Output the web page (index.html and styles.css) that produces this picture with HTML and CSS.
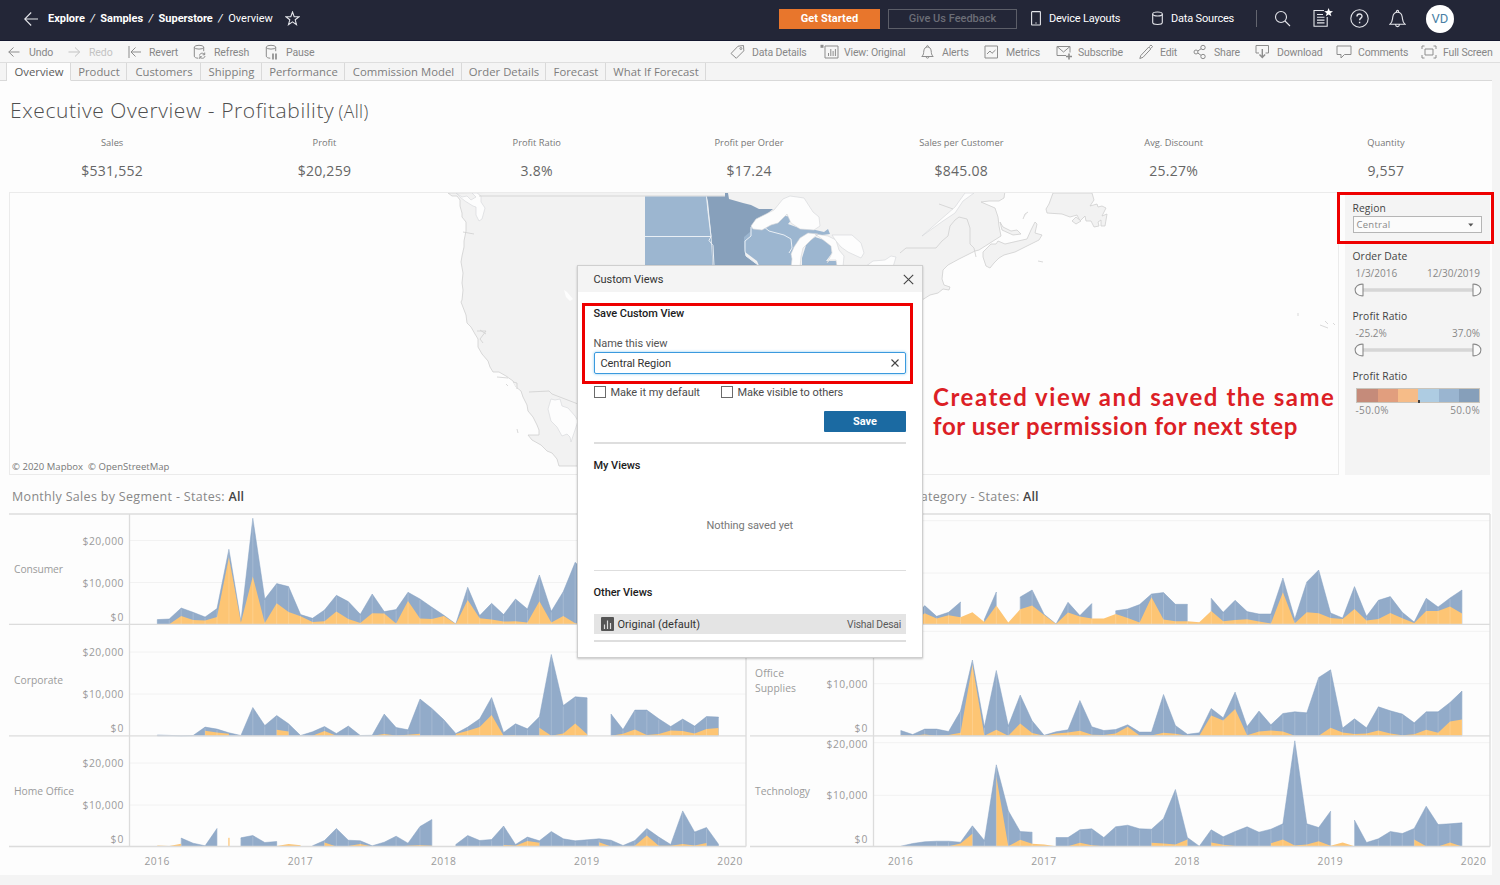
FILE: index.html
```html
<!DOCTYPE html>
<html lang="en">
<head>
<meta charset="utf-8">
<title>Superstore - Overview</title>
<link rel="stylesheet" href="styles.css">
</head>
<body>
<header class="topbar">
  <svg class="back" width="14" height="14" viewBox="0 0 14 14"><path d="M14 7H.8M7.2.5.7 7l6.500 6.500"/></svg>
  <nav class="crumbs"><b>Explore</b><i>/</i><b>Samples</b><i>/</i><b>Superstore</b><i>/</i><span>Overview</span></nav>
  <svg class="star" width="15" height="15" viewBox="0 0 15 15"><path d="M7.500 1l1.700 4.600 4.800.2-3.800 3 1.300 4.800-4-2.800-4 2.800 1.300-4.800L1 5.800l4.800-.2z"/></svg>
  <div class="top-right">
    <button class="btn-start">Get Started</button>
    <button class="btn-feedback">Give Us Feedback</button>
    <span class="top-link device"><svg width="10" height="15" viewBox="0 0 10 15"><rect x=".6" y=".6" width="8.800" height="13.400" rx=".6"/><path d="M4.300 12h1.400"/></svg>Device Layouts</span>
    <span class="top-link sources"><svg width="11" height="15" viewBox="0 0 11 15"><ellipse cx="5.500" cy="3" rx="4.800" ry="2"/><path d="M.7 3v8.500c0 2.600 9.600 2.600 9.600 0V3"/></svg>Data Sources</span>
    <span class="divider"></span>
    <svg class="t-search" width="17" height="17" viewBox="0 0 17 17"><circle cx="7" cy="7" r="5.500"/><path d="M11 11l5 5"/></svg>
    <svg class="t-list" width="20" height="19" viewBox="0 0 20 19"><path d="M11 2.500H1v15.800h13.200V9M4 6.500h6M4 9.300h7.500M4 12.100h7.500M4 14.900h7.500"/><path class="fill" d="M15.600 0l1.200 3 3.200.2-2.500 2 .9 3.100-2.800-1.700-2.800 1.700.9-3.100-2.500-2 3.200-.2z"/></svg>
    <svg class="t-help" width="19" height="19" viewBox="0 0 19 19"><circle cx="9.500" cy="9.500" r="8.700"/><path d="M7 7.600c0-3.400 5-3.300 5-.4 0 1.900-2.400 1.900-2.400 4M9.600 12.800v1.400" stroke-width="1.400"/></svg>
    <svg class="t-bell" width="17" height="19" viewBox="0 0 17 19"><path d="M1 15.200c2.700-2 2.300-4.500 2.800-7.400C4.300 4.900 6 3.300 8.500 3.300s4.200 1.600 4.700 4.500c.5 2.900.1 5.400 2.800 7.400zM7.300 3.200c0-2.400 2.400-2.400 2.400 0M6.500 15.500c.4 2.800 3.600 2.800 4 0"/></svg>
    <span class="avatar">VD</span>
  </div>
</header>

<div class="toolbar">
  <div class="tools-left">
    <span><svg viewBox="0 0 20 16"><path d="M11.500 8H.7M5.500 3.500L.8 8l4.700 4.500"/></svg>Undo</span>
    <span class="off"><svg viewBox="0 0 20 16"><path d="M.5 8h11M7 3.500L11.700 8 7 12.500"/></svg>Redo</span>
    <span><svg viewBox="0 0 20 16"><path d="M1 2v12M13 8H3M7.500 3.500L3 8l4.500 4.500"/></svg>Revert</span>
    <span><svg viewBox="0 0 20 16"><ellipse cx="6" cy="3.200" rx="4.700" ry="1.900"/><path d="M1.300 3.200v9c0 1.200 2 2 4 2M10.700 3.200v4M6.500 11.500c.3-2.800 4.300-3 5-.8M12 12c-.3 2.800-4.300 3-5 .8M11.700 8.500v2.300H9.600M6.800 15v-2.300h2"/></svg>Refresh</span>
    <span><svg viewBox="0 0 20 16"><ellipse cx="6" cy="3.200" rx="4.700" ry="1.900"/><path d="M1.300 3.200v9c0 1.200 2 2 4 2M10.700 3.200v4"/><path d="M8 9.500v6M11 9.500v6" stroke-width="1.700"/></svg>Pause</span>
  </div>
  <div class="tools-right">
    <span><svg viewBox="0 0 22 16"><path d="M1 9.500L8 2.200 13.500 1.500 13.800 6.800 6.300 14.300z"/><circle cx="10.900" cy="4.500" r="1"/></svg>Data Details</span>
    <span><svg viewBox="0 0 22 16"><path d="M5 2h13v12H5zM8.500 12V9M10.800 12V5M13.100 12V7M15.400 12V5"/><path class="solid" d="M.5 .8h3v3h-3z"/></svg>View: Original</span>
    <span><svg viewBox="0 0 22 16"><path d="M.8 12.500c2-1.800 1.700-3.300 2-5.500.4-2.600 1.500-4 3.700-4s3.300 1.400 3.700 4c.3 2.200 0 3.700 2 5.500zM5.500 3c0-2 2-2 2 0M5 12.700c.3 2 2.700 2 3 0"/></svg>Alerts</span>
    <span><svg viewBox="0 0 22 16"><path d="M1 2h12.500v12H1zM3 10l3-3 2 2.300L11.500 6"/></svg>Metrics</span>
    <span><svg viewBox="0 0 22 16"><path d="M10 11.500H1v-9h13v6M1 2.500l6.500 5.500L14 2.500"/><path d="M13 9.500v6M10 12.500h6" stroke-width="1.600"/></svg>Subscribe</span>
    <span><svg viewBox="0 0 22 16"><path d="M.8 14.500l1-3L9.800 3l2 2L4 13.300zM10.300 2.500L12 1l1.500 1.500-1.400 1.800"/></svg>Edit</span>
    <span><svg viewBox="0 0 22 16"><circle cx="3" cy="8" r="2"/><circle cx="10" cy="3.500" r="2.200"/><circle cx="10" cy="12.500" r="2.200"/><path d="M4.800 7L8 4.800M4.800 9L8 11.300"/></svg>Share</span>
    <span><svg viewBox="0 0 22 16"><path d="M4 9H1V1.500h12.500V9h-3"/><path d="M7.300 5v8M4.500 10.500l2.800 3 2.800-3" stroke-width="1.400"/></svg>Download</span>
    <span><svg viewBox="0 0 22 16"><path d="M1 2h14v8.500H8.500L5 14v-3.500H1z"/></svg>Comments</span>
    <span><svg viewBox="0 0 22 16"><path d="M4 5h8v6H4zM3.500 2H1v3M12.500 2H15v3M3.500 14H1v-3M12.500 14H15v-3"/></svg>Full Screen</span>
  </div>
</div>

<nav class="tabs">
  <span class="lead"></span><span class="on">Overview</span><span>Product</span><span>Customers</span><span>Shipping</span><span>Performance</span><span>Commission Model</span><span>Order Details</span><span>Forecast</span><span>What If Forecast</span><span class="rest"></span>
</nav>

<main class="dash">
  <h1>Executive Overview - Profitability <small>(All)</small></h1>
  <section class="kpis">
    <div><span>Sales</span><b>$531,552</b></div>
    <div><span>Profit</span><b>$20,259</b></div>
    <div><span>Profit Ratio</span><b>3.8%</b></div>
    <div><span>Profit per Order</span><b>$17.24</b></div>
    <div><span>Sales per Customer</span><b>$845.08</b></div>
    <div><span>Avg. Discount</span><b>25.27%</b></div>
    <div><span>Quantity</span><b>9,557</b></div>
  </section>

  <section class="middle">
    <div class="map">
      <svg width="1328" height="281" viewBox="10 193 1328 281">
        <g class="land">
          <path d="M448 193l4 3 5 0 3 4 0 6 2 7 0 4 4 5 0 9-2 10 0 6-2 9-1 6 2 11-1 10 1 7-1 10-1 2 5 13 1 8 4 4 4 7 3 5 0 8 4 7 6 7 2 6 3 5 6 0 7 4 7 5 3 6 5 4 2 6 4 8 1 6 5 6 4 8 2 5 0 5-6 0-5 0 4 5 9 5 6 6 5 2 5 6 2 7h130L922 300l8-5 8-2 5-4 6 1 1-3-6-2-2-6 1-9 5-5 11-6 8-4 8-4 4-1 22-14-2-10-1-9-3-9-14-6 8-1 10 0 5-3 1-7-6-5z"/>
          <path d="M983 257l0-5 8-8 5 0 2-3 7 3 13-3 9-2 4-9 4-8 2 2-2 9 7 2-3 5-8 4-6 3-10 5-11 3-5 3-5 5-4 5-4-2z"/>
          <path d="M1053 193l-4 11-3 5 1 4 15 1 8 3 7-2 3 6 5-5 1 5 5 0 3 6 5-1-1-4 3-2 0 6 4 0 2-12-5 2 4-8-4-2-4 1-1-3-7 2 4-6-2-7z"/>
          <path d="M1000 222l3 5 8 4 6-1 4 4-8 1-11-5zM1023 219l2-5 3-2M1072 221l4-4 5 4-5 3zM1038 261l5 1M1298 313l0 3M1320 325l8 3M1325 321l3 3M1333 323l2 2M497 377l11 1M506 384l2 2M513 382l4 1 0 6M517 429l1 4"/>
        </g>
        <g class="water">
          <path class="edged" d="M456 193l6 4 5-1 4 4 5-3-4-4h5l4 3 0 6 4 6-3 11-3 2-3-6 0-8-3-1-8-5-5-4z"/>
          <path d="M564 290l3 2 6 7-3 2-4-4z"/>
          <path class="edged" d="M578 421l-3-5-7-8-6-2-2-7-5 1-4-1-3 10 3 12 6 6 5 9 5-2 3 3 1 5z"/>
          <path class="outline" d="M529 392l20-1 3 3 26 10"/>
          <path class="edged" d="M974 193l-11 8-8 12-12 8-21 15 17-15 16-14 10-14z"/>
          <path d="M479 196H725M939 204l14 5M463 232l11 2M480 330l6 4M477 331l9 0M486 331l-6 8 3 4M900 253l6-5h30l6-7 6-5 2-10 5-6 4-3 8 2 3 9 0 16 4 4 2 9" class="outline"/>
        </g>
        <path class="blue" d="M645 196.500H706.500L708 212 711 236 712.500 267H645z"/>
        <path class="navy" d="M706.500 196.500H725V193H728l1 6 14 4 8 2 8 4 14 0-22 18v9l-6 5 0 10 1 5 12 9 3 7H713l-1-30-4-40z"/>
        <path class="blue" d="M751 227l12-1 22-10 9 1-6 7 11 4 8 0 17 4 4-3 2 5-15 2-10 7-8 7-6 18H760l-3-7-12-9-1-5 0-10 6-5z"/>
        <path class="blue" d="M815 237l9 3 7 6 1 7-6 8 10 0 4 6H802l0-9 5-16z"/>
        <g class="stateline"><path d="M645 236.500h66M706.500 196.500l1.500 15 3 25-2 4 4 5 1 20M751 227v9l-6 5 0 10 1 5 12 9 2 2M763 226l6 5 15 4 7 4 1 9-3 5"/></g>
        <g class="water edged">
          <path d="M751 226l5-7 18-9 9-11 7-3 14 2 9 14 6 5 1 9-6 4-14-1-9-6-4-9-9 9-7 2-9 5-9-1z"/>
          <path d="M791 254l3-7 6-9 8-5 10 1-7 6-8 8-2 9-1 10H791l1-8zM815 234l13 2 8 4 3 10 5 6-1 11h-6l-1-7-6 0-3 3 5-10-1-7-9-7z"/>
          <path d="M832 235l12 0 8 0 9 8 3 10-3 5-13-6-7-5-5-6z"/>
          <path d="M865 267l8-6 12-1 6-4 5 1-3 10z"/>
        </g>
      </svg>
      <div class="credit">© 2020 Mapbox&nbsp; © OpenStreetMap</div>
    </div>
    <aside class="filters">
      <label class="region">Region</label>
      <div class="select"><span>Central</span><svg width="6" height="4" viewBox="0 0 7 5"><path d="M0 .5h6.500L3.200 4.500z"/></svg></div>
      <h4>Order Date</h4>
      <div class="ends"><span>1/3/2016</span><span>12/30/2019</span></div>
      <svg class="slider" width="128" height="14" viewBox="0 0 128 14"><path class="track" d="M9 7H119"/><path d="M9 1.200v11.600C-1.500 13.500-1.500.5 9 1.200zM119 1.200v11.600C129.500 13.500 129.500.5 119 1.200z"/></svg>
      <h4>Profit Ratio</h4>
      <div class="ends"><span>-25.2%</span><span>37.0%</span></div>
      <svg class="slider" width="128" height="14" viewBox="0 0 128 14"><path class="track" d="M9 7H119"/><path d="M9 1.200v11.600C-1.500 13.500-1.500.5 9 1.200zM119 1.200v11.600C129.500 13.500 129.500.5 119 1.200z"/></svg>
      <h4>Profit Ratio</h4>
      <div class="legend"><i></i><i></i><i></i><i></i><i></i><i></i></div>
      <div class="ends legend-ends"><span>-50.0%</span><span>50.0%</span></div>
    </aside>
  </section>

  <section class="charts">
    <div class="chart"><h2>Monthly Sales by Segment - States: <b>All</b></h2><svg id="segment" width="740" height="362" viewBox="8 512 740 362"></svg></div>
    <div class="chart"><h2>Monthly Sales by Product Category - States: <b>All</b></h2><svg id="category" width="742" height="362" viewBox="750 512 742 362"></svg></div>
  </section>
</main>

<div class="modal">
  <div class="modal-head"><span>Custom Views</span><svg width="11" height="11" viewBox="0 0 11 11"><path d="M.8.8l9.400 9.400M10.200.8L.8 10.200"/></svg></div>
  <div class="modal-body">
    <h3>Save Custom View</h3>
    <label>Name this view</label>
    <div class="field"><span>Central Region</span><svg width="8" height="8" viewBox="0 0 8 8"><path d="M.5.5l7 7M7.500.5l-7 7"/></svg></div>
    <div class="checks"><span><i></i>Make it my default</span><span><i></i>Make visible to others</span></div>
    <button class="save">Save</button>
    <hr>
    <h3 class="mine">My Views</h3>
    <p>Nothing saved yet</p>
    <hr>
    <h3 class="other">Other Views</h3>
    <div class="row"><svg width="13" height="14" viewBox="0 0 13 14"><rect width="13" height="14" rx="1"/><path d="M3.500 12V7.500M6.500 12V3.500M9.500 12V6"/></svg><span>Original (default)</span><em>Vishal Desai</em></div>
    <hr class="last">
  </div>
</div>

<div class="note"><span>Created view and saved the same</span><span>for user permission for next step</span></div>
<div class="mark mark-region"></div>
<div class="mark mark-save"></div>
<script src="charts.js"></script>
</body>
</html>
```
FILE: styles.css
```css
* { box-sizing: border-box; }
body { margin: 0; width: 1500px; height: 885px; overflow: hidden; background: #f4f4f4; font-family: Roboto, "Liberation Sans", sans-serif; position: relative; }
svg { display: block; fill: none; flex: none; }
button { font-family: inherit; padding: 0; }

.topbar { height: 41px; background: #232637; border-bottom: 1px solid #14182f; display: flex; align-items: center; padding: 0 46px 3px 24px; color: #fff; font-size: 11px; }
.topbar svg { stroke: #e4e5ea; stroke-width: 1.1; }
.crumbs { display: flex; margin-left: 10px; letter-spacing: -.02px; }
.crumbs b { font-weight: 700; }
.crumbs i { width: 15.500px; text-align: center; }
.star { margin-left: 12px; }
.top-right { margin-left: auto; display: flex; align-items: center; }
.btn-start { width: 101px; height: 20px; border: 0; background: #e8762c; color: #fff; font-size: 11px; font-weight: 700; letter-spacing: .1px; }
.btn-feedback { width: 129px; height: 20px; margin-left: 8px; border: 1px solid #5c5e68; background: none; color: #6b6d76; font-size: 11px; font-weight: 500; letter-spacing: 0; }
.top-link { display: flex; align-items: center; letter-spacing: -.18px; white-space: nowrap; }
.device { width: 121px; margin-left: 14px; gap: 8px; }
.sources { width: 104px; gap: 8px; }
.divider { width: 1px; height: 17px; background: #63656f; }
.t-search { margin-left: 17px; }
.t-list { margin-left: 22px; margin-top: -3px; }
.topbar .t-list .fill { fill: #fff; stroke: none; }
.t-help { margin-left: 17px; }
.t-bell { margin-left: 20px; }
.avatar { width: 28px; height: 28px; margin-left: 20px; border-radius: 50%; background: #fff; color: #4a7fa5; font-size: 13px; line-height: 28px; text-align: center; }

.toolbar { height: 22px; background: #f6f6f6; border-bottom: 1px solid #dedede; display: flex; justify-content: space-between; padding: 1px 0 0 8px; font-size: 10.500px; color: #878787; letter-spacing: -.16px; }
.toolbar svg { height: 16px; stroke: #8d8d8d; stroke-width: 1; }
.toolbar .solid { fill: #8d8d8d; stroke: none; }
.toolbar span { display: flex; align-items: center; white-space: nowrap; }
.tools-left { display: grid; grid-template-columns: 60px 60px 65px 72px 60px; letter-spacing: -.1px; }
.tools-left svg { width: 20px; margin-right: 1px; }
.tools-right { display: grid; grid-template-columns: 90px 101px 63px 72px 83px 54px 62px 81px 85px 79px; }
.tools-right svg { width: 22px; }
.tools-right span:nth-child(2) svg { margin-right: 2px; }
.tools-right span:nth-child(3) svg, .tools-right span:nth-child(6) svg, .tools-right span:nth-child(7) svg { margin-right: -1px; }
.toolbar .off { color: #c3c3c3; }
.toolbar .off svg { stroke: #c3c3c3; }

.tabs { height: 17px; display: grid; grid-template-columns: 7px 64px 56px 74px 61px 83px 117px 84px 60px 100px 1fr; padding-right: 8px; font: 11.300px/17px "Open Sans", sans-serif; color: #7d7d7d; position: relative; }
.tabs span { height: 18px; border-right: 1px solid #d9d9d9; border-bottom: 1px solid #d9d9d9; text-align: center; white-space: nowrap; letter-spacing: .02px; padding-left: 1px; }
.tabs .on { background: #fdfdfd; border-bottom-color: #fdfdfd; color: #5b5b5b; }
.tabs .rest { border-right: 0; }

.dash { width: 1492px; height: 795px; background: #fdfdfd; font-family: "Open Sans", sans-serif; color: #777; }
.dash h1 { margin: 0; height: 53px; padding: 14px 0 0 10px; font-size: 21px; line-height: 32px; font-weight: 300; color: #4f4f4f; letter-spacing: .6px; white-space: nowrap; }
.dash h1 small { font-size: 17.500px; letter-spacing: .5px; margin-left: -2px; }
.kpis { height: 59px; display: grid; grid-template-columns: repeat(7, 212.300px); padding-left: 6px; text-align: center; }
.kpis div { display: flex; flex-direction: column; }
.kpis span { font-size: 9.300px; line-height: 20px; letter-spacing: 0; }
.kpis b { font-size: 14px; line-height: 20px; margin-top: 8px; font-weight: 400; color: #666; letter-spacing: .25px; }

.middle { display: flex; height: 283px; padding-left: 9px; }
.map { width: 1330px; height: 283px; border: 1px solid #ebebeb; }
.map svg { height: 281px; }
.land { fill: #f2f2f2; stroke: #cfcfcf; stroke-width: .8; }
.water { fill: #fdfdfd; }
.water .outline { fill: none; stroke: #cfcfcf; stroke-width: .8; }
.edged { stroke: #d3d5d8; stroke-width: .6; }
.blue { fill: #9cb6d0; }
.navy { fill: #87a0bb; }
.stateline { stroke: #e9eff5; stroke-width: 1; }
.credit { margin-top: -14px; padding-left: 2px; font-size: 9.500px; line-height: 14px; color: #777; letter-spacing: .03px; }
.filters { width: 145px; margin-left: 6px; padding: 10px 8px 0 7.500px; background: #f4f4f4; font-size: 10.500px; color: #888; }
.filters .region, .filters h4 { display: block; margin: 0; font-size: 10.300px; line-height: 13px; font-weight: 400; color: #444; letter-spacing: .1px; }
.select { height: 17px; margin-top: 1px; border: 1px solid #b5b5b5; background: #fbfbfb; display: flex; align-items: center; justify-content: space-between; padding: 0 7px 0 3px; font-size: 9.500px; letter-spacing: .25px; }
.select svg { fill: #555; }
.filters h4 { margin-top: 17px; }
.ends { display: flex; justify-content: space-between; padding: 0 2px 0 3px; margin-top: 4px; font-size: 10px; line-height: 12px; }
.slider { margin: 4px 0 0 1.500px; stroke: #8a8a8a; stroke-width: 1.1; fill: #fafafa; }
.slider .track { stroke: #d6d6d6; stroke-width: 3.500; }
.slider + h4 { margin-top: 13px; }
.legend { height: 15px; margin: 5px 2px 0 3px; border: 1px solid #c9c4bb; display: grid; grid-template-columns: 1.070fr 1fr 1fr 1fr 1fr 1fr; position: relative; }
.legend::after { content: ""; position: absolute; left: 61px; bottom: -1px; width: 2px; height: 3px; background: #444; }
.legend i:nth-child(1) { background: #c58b7a; }
.legend i:nth-child(2) { background: #e19e7e; }
.legend i:nth-child(3) { background: #f6bc88; }
.legend i:nth-child(4) { background: #aecce2; }
.legend i:nth-child(5) { background: #9ab5d0; }
.legend i:nth-child(6) { background: #869fba; }
.legend-ends { margin-top: 1px; letter-spacing: .35px; }

.charts { display: grid; grid-template-columns: 742px 742px; padding-left: 8px; }
.chart h2 { margin: 0; padding: 13px 0 0 4px; height: 37px; font-size: 12.500px; line-height: 18px; font-weight: 400; color: #888; letter-spacing: .31px; white-space: nowrap; }
.chart h2 b { font-weight: 600; color: #444; letter-spacing: .1px; }
.chart svg text { font: 10.300px "Open Sans", sans-serif; fill: #9b9b9b; }
.grid { stroke: #f2f2f2; }
.frame { stroke: #dcdcdc; stroke-width: 1.300; }
.sales { fill: #92abc9; stroke: #85a0c2; stroke-width: .5; }
.loss { fill: #fdc574; }
.month { stroke: #fff; stroke-opacity: .18; }

.modal { position: absolute; left: 577px; top: 265px; width: 345.500px; height: 393px; background: #fff; border: 1px solid #cfcfcf; box-shadow: 0 1px 2px rgba(0,0,0,.22); font-size: 11px; color: #333; letter-spacing: -.06px; }
.modal-head { height: 26px; background: #f4f4f4; display: flex; justify-content: space-between; align-items: center; padding: 0 8px 0 15.500px; }
.modal-head svg, .field svg { stroke: #444; stroke-width: 1.100; }
.modal-body { padding: 15px 15.500px 0; }
.modal h3 { margin: 0; font-size: 11px; line-height: 14px; font-weight: 500; color: #1c1c1c; letter-spacing: -.05px; }
.modal label { display: block; margin-top: 16px; line-height: 14px; color: #555; }
.field { height: 22px; margin-top: 1px; border: 1.500px solid #3b9ade; border-radius: 2px; box-shadow: 0 0 3px #8cc8f0; display: flex; align-items: center; justify-content: space-between; padding: 0 6px; }
.checks { display: flex; margin-top: 11px; height: 14px; align-items: center; color: #4c4c4c; }
.checks span { display: flex; align-items: center; width: 127px; white-space: nowrap; }
.checks i { flex: none; width: 12px; height: 12px; margin-right: 5px; border: 1px solid #6b6b6b; }
.save { display: block; width: 82px; height: 21px; margin: 12px 0 0 auto; border: 0; border-radius: 1px; background: #1b6aa2; color: #fff; font-size: 11px; font-weight: 700; letter-spacing: 0; }
.modal hr { border: 0; height: 1.500px; background: #dedede; margin: 10px 0 0; }
.modal .mine { margin-top: 15px; }
.modal p { margin: 46px 0 0; line-height: 14px; text-align: center; color: #777; }
.modal p + hr { margin-top: 37px; }
.modal .other { margin-top: 15px; }
.row { height: 20px; margin-top: 14px; padding: 0 5px 0 7px; background: #e4e4e4; display: flex; align-items: center; }
.row svg rect { fill: #555; }
.row svg path { stroke: #ddd; stroke-width: 1.200; }
.row span { margin-left: 4px; font-size: 11px; letter-spacing: .03px; }
.row em { margin-left: auto; font-style: normal; font-size: 10.300px; color: #5a5a5a; letter-spacing: -.2px; }
.modal hr.last { margin-top: 6px; }

.note { position: absolute; left: 933px; top: 382px; font: 700 24px/29px Lato, sans-serif; color: #dc1f26; white-space: nowrap; }
.note span { display: block; letter-spacing: 1.540px; }
.note span + span { letter-spacing: .6px; }
.mark { position: absolute; border: 3px solid #ee0000; }
.mark-region { left: 1337px; top: 192px; width: 157px; height: 52px; }
.mark-save { left: 582px; top: 303px; width: 331px; height: 81px; }
```
FILE: charts.js
```js
const MONTH = 11.94;

// Heights in pixels above each row's baseline, one per month; null leaves a gap.
const _ = null;
const rows = {
  consumer: {
    sales: [4.7,5.3,16.3,12,7.3,15.7,75,3,106,25.3,40.7,37.7,9.7,6,14.3,29,22.7,10,30.3,12.7,14.7,32,25.3,17,9,.3,37,8.7,21,9.7,25.3,15.3,49.3,13,32.7,62,50],
    loss: [0,0,8.3,4.3,3.7,7.3,67,1.7,47.7,1.3,21,12.3,8,2.3,3,12.7,5.3,1.3,11,10.7,.7,23.3,5.7,5.3,8.3,.3,24.3,6,4.7,2.7,3,1.7,23,1.7,8.3,1,0]
  },
  corporate: {
    sales: [.8,.4,0,.3,8.7,6.7,3,.3,28.3,10.3,20.3,12,.3,4,9.3,2.3,9.7,.3,.5,21.7,8.3,6,36.7,27.3,16,2.3,8.7,17,38.3,3.3,12,7,19,81.3,30.3,39,38,_,21.7,6.3,25.7,25.7,17,9.3,16.7,9.7,19.3,18.7],
    loss: [_,_,_,_,5,3.3,2,_,_,_,6,4.3,_,0,4.7,0,_,_,0,1.7,.3,1,2,_,_,1.7,5,8.7,20.7,0,.7,_,8,0,2.3,12.3,1.5,_,0,2,6.3,.7,1.7,5.3,4.7,2.3,6.7,7.7]
  },
  home: {
    sales: [_,_,8.4,3.3,.7,18,_,8.7,11,4,5,_,_,.7,6,18,6.3,5.7,.7,4.3,10.3,3.3,20,27,_,2,11,6,7,20.5,2,9.4,5.7,15,7.7,5.7,6.7,7.7,6.3,1,6,18,9.4,2,35.6,14.5,19,2.3],
    loss: [1,.4,2.7,_,_,_,8.7,_,_,_,.4,2.5,1.3,_,4,0,.5,2.4,0,_,0,.7,1.2,.7,_,_,_,_,_,1.5,.7,5.4,3.7,_,_,_,_,4.3,0,0,.7,11,.7,.7,2.4,1,3.4,_]
  },
  furniture: {
    sales: [3,5,18.7,8,12,22.3,_,5,32.3,_,27.3,34.3,10,.3,22,8.7,20.7,_,13.5,15.3,19.7,30.3,31.7,20,20,_,26,12,24,12.7,10.3,10.3,46.3,5.3,42.3,54.3,11.3,6.3,37.7,8,24,27.7,12,2.3,26,17.3,26.3,34.3],
    loss: [1,2,11,5.7,9,7,12,2.3,18.7,1.7,15,18.7,9.3,.3,11.7,7.7,5.7,5.7,10.3,6.3,1.7,27,4.7,3,3,2,13.3,3,4.3,5,2.7,.7,32,1,12,11,6.3,5.3,15.3,3.7,5.3,11.3,6,1.3,13.3,13.3,17.7,10.7]
  },
  office: {
    sales: [5.3,1.3,6.7,6.7,4.3,24.7,75.7,9,65.3,10,40.7,15,.5,4,6,35.3,9,5.3,6.3,11,3.7,3.7,41.3,10.3,1.5,3,27.3,18,43.7,9.3,24.7,11,22.3,24,23,58.3,66,7.7,17,8,29,25,21.7,13,24,24,33.3,44.7],
    loss: [.5,0,1.3,0,.7,3,71,0,6,0,12.3,2.7,0,2.3,3.3,5,1,.7,2.3,9,.3,.3,3,2,0,0,20.3,15.3,26.7,.5,4.3,5.3,4.3,0,0,0,8,3.3,1.7,2.3,5.3,2.3,.5,1.5,6,3,14.3,16.3]
  },
  technology: {
    sales: [.3,3,4.7,5.3,5.3,4.3,20.7,6,81.7,35.7,15,14.3,_,9,9,16.7,17.7,9,19.7,21.3,17.7,17.3,28,57,9,.3,16.7,9.7,15,19.7,14.3,17.3,22.7,105.7,22.7,19,35.3,_,26.3,4,7.7,15,13,18,40.3,22,22.7,23.7],
    loss: [_,_,_,_,.3,3,12.7,_,70,.3,6.7,2.7,2,.3,.3,3.7,1.3,.3,_,_,_,3.7,3,2,7,_,4,1.7,.5,_,_,3.3,7,1,2,5.3,.7,4,.3,_,_,_,_,7,.3,0,4,0]
  }
};

function runs(values) {
  const out = [];
  let current = null;
  values.forEach((v, i) => {
    if (v === null) { current = null; return; }
    if (!current) out.push(current = []);
    current.push([i, v]);
  });
  return out;
}

function area(values, x0, base, cls) {
  return runs(values).map(run => {
    const xa = x0 + run[0][0] * MONTH;
    const xb = x0 + run[run.length - 1][0] * MONTH;
    if (run.length === 1) return `<rect class="${cls}" x="${xa - .6}" y="${base - run[0][1]}" width="1.2" height="${run[0][1]}"/>`;
    const top = run.map(([i, v]) => `L${(x0 + i * MONTH).toFixed(1)} ${(base - v).toFixed(1)}`).join("");
    return `<path class="${cls}" d="M${xa} ${base}${top}L${xb} ${base}z"/>`;
  }).join("");
}

function label(text, x, y, width, anchor) {
  return `<text x="${x}" y="${y}" text-anchor="${anchor || "start"}" textLength="${width}">${text}</text>`;
}

function line(x1, y1, x2, y2, cls) {
  return `<path class="${cls}" d="M${x1} ${y1}L${x2} ${y2}"/>`;
}

function draw(id, o) {
  let svg = "";
  o.grid.forEach(y => svg += line(o.axis, y, o.right, y, "grid"));
  o.rows.forEach(([name, base]) => {
    const { sales, loss } = rows[name];
    svg += area(sales, o.x0, base, "sales") + area(loss, o.x0, base, "loss");
    sales.forEach((v, i) => {
      if (v > 5) svg += line(o.x0 + i * MONTH, base - v + 1, o.x0 + i * MONTH, base, "month");
    });
    svg += line(o.left, base, o.right, base, "frame");
  });
  svg += line(o.left, 514, o.right, 514, "frame") + line(o.axis, 514, o.axis, 846.5, "frame") + line(o.right, 514, o.right, 846.5, "frame");
  o.labels.forEach(l => svg += label(...l));
  [2016, 2017, 2018, 2019, 2020].forEach((y, i) => svg += label(y, o.x0 - .3 + i * 143.2, 864.5, 25, "middle"));
  document.getElementById(id).innerHTML = svg;
}

const end = (text, x, y) => [text, x, y, text.length === 2 ? 13 : 41, "end"];

draw("segment", {
  left: 9, axis: 129.5, right: 746, x0: 157.3,
  grid: [540.5, 582.5, 652, 694, 763, 805],
  rows: [["consumer", 624.3], ["corporate", 735.8], ["home", 846.5]],
  labels: [
    ["Consumer", 14, 572.5, 49], ["Corporate", 14, 684, 49], ["Home Office", 14, 795, 60],
    end("$20,000", 123.5, 544.7), end("$10,000", 123.5, 586.7), end("$0", 123.5, 621),
    end("$20,000", 123.5, 656), end("$10,000", 123.5, 698), end("$0", 123.5, 732.3),
    end("$20,000", 123.5, 766.7), end("$10,000", 123.5, 808.7), end("$0", 123.5, 843)
  ]
});

draw("category", {
  left: 750, axis: 873.5, right: 1490, x0: 900.8,
  grid: [520.7, 573, 631.3, 683.7, 742.7, 795.3],
  rows: [["furniture", 624.3], ["office", 735.8], ["technology", 846.5]],
  labels: [
    ["Office", 755, 676.7, 29], ["Supplies", 755, 692.2, 41], ["Technology", 755, 795, 55],
    end("$10,000", 867.5, 688), end("$0", 867.5, 732.3),
    end("$20,000", 867.5, 748), end("$10,000", 867.5, 799.3), end("$0", 867.5, 843)
  ]
});
```
